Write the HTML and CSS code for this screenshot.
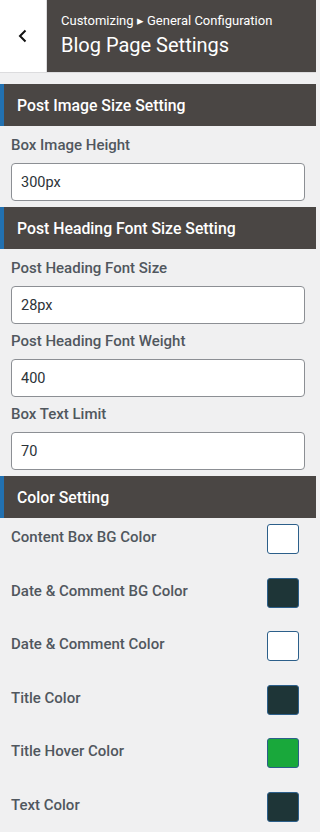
FILE: index.html
```html
<!DOCTYPE html>
<html>
<head>
<meta charset="utf-8">
<link rel="stylesheet" href="styles.css">
</head>
<body>
<div class="panel">
  <header class="top">
    <div class="back">
      <svg width="12" height="14" viewBox="0 0 12 14"><path d="M8.5 1.5 L3 7 L8.5 12.5" fill="none" stroke="#111" stroke-width="2"/></svg>
    </div>
    <div class="title-block">
      <div class="crumb">Customizing ▸ General Configuration</div>
      <div class="title">Blog Page Settings</div>
    </div>
  </header>

  <div class="section first">Post Image Size Setting</div>
  <div class="field">
    <div class="label">Box Image Height</div>
    <div class="input">300px</div>
  </div>

  <div class="section">Post Heading Font Size Setting</div>
  <div class="field">
    <div class="label">Post Heading Font Size</div>
    <div class="input">28px</div>
  </div>
  <div class="field next">
    <div class="label">Post Heading Font Weight</div>
    <div class="input">400</div>
  </div>
  <div class="field next">
    <div class="label">Box Text Limit</div>
    <div class="input">70</div>
  </div>

  <div class="section">Color Setting</div>
  <div class="colors">
    <div class="crow"><span class="clabel">Content Box BG Color</span><span class="swatch white"></span></div>
    <div class="crow"><span class="clabel">Date &amp; Comment BG Color</span><span class="swatch dark"></span></div>
    <div class="crow"><span class="clabel">Date &amp; Comment Color</span><span class="swatch white"></span></div>
    <div class="crow"><span class="clabel">Title Color</span><span class="swatch dark"></span></div>
    <div class="crow"><span class="clabel">Title Hover Color</span><span class="swatch green"></span></div>
    <div class="crow"><span class="clabel">Text Color</span><span class="swatch dark"></span></div>
  </div>
</div>
</body>
</html>
```

FILE: styles.css
```css
html, body {
  margin: 0;
  padding: 0;
  background: #f0f0f1;
  font-family: Roboto, "Liberation Sans", sans-serif;
  overflow: hidden;
}
.panel {
  width: 316px;
}
.top {
  display: flex;
  height: 72px;
  border-bottom: 1px solid #dcdcde;
}
.back {
  width: 46px;
  background: #fff;
  border-right: 1px solid #dcdcde;
  display: flex;
  align-items: center;
  justify-content: center;
}
.title-block {
  flex: 1;
  background: #4a4644;
  color: #fff;
  padding-left: 14px;
  display: flex;
  flex-direction: column;
}
.crumb {
  font-size: 13px;
  line-height: 16px;
  margin-top: 13px;
}
.title {
  font-size: 20px;
  line-height: 24px;
  margin-top: 4px;
}
.section {
  background: #4a4644;
  color: #fff;
  height: 42px;
  display: flex;
  align-items: center;
  font-size: 15.8px;
  font-weight: 500;
  padding-left: 13px;
  border-left: 4px solid #2271b1;
  margin-top: 6px;
}
.section.first {
  margin-top: 11px;
}
.field {
  padding: 10px 11px 0 11px;
}
.field.next {
  padding-top: 8px;
}
.label {
  font-size: 15px;
  font-weight: 500;
  line-height: 18px;
  color: #50575e;
  margin-bottom: 9px;
}
.input {
  height: 36px;
  box-sizing: content-box;
  border: 1px solid #8c8f94;
  border-radius: 4px;
  background: #fff;
  font-size: 14.5px;
  color: #2c3338;
  display: flex;
  align-items: center;
  padding-left: 9px;
}
.colors {
  padding-top: 6px;
}
.crow {
  display: flex;
  justify-content: space-between;
  align-items: flex-start;
  height: 53.6px;
  padding: 0 17px 0 11px;
}
.clabel {
  font-size: 15px;
  font-weight: 500;
  line-height: 18px;
  color: #50575e;
  margin-top: 4px;
}
.swatch {
  width: 30px;
  height: 28px;
  border: 1px solid #2c5f8a;
  border-radius: 3px;
}
.swatch.white { background: #fff; }
.swatch.dark { background: #1e3537; }
.swatch.green { background: #19a83b; }
```
